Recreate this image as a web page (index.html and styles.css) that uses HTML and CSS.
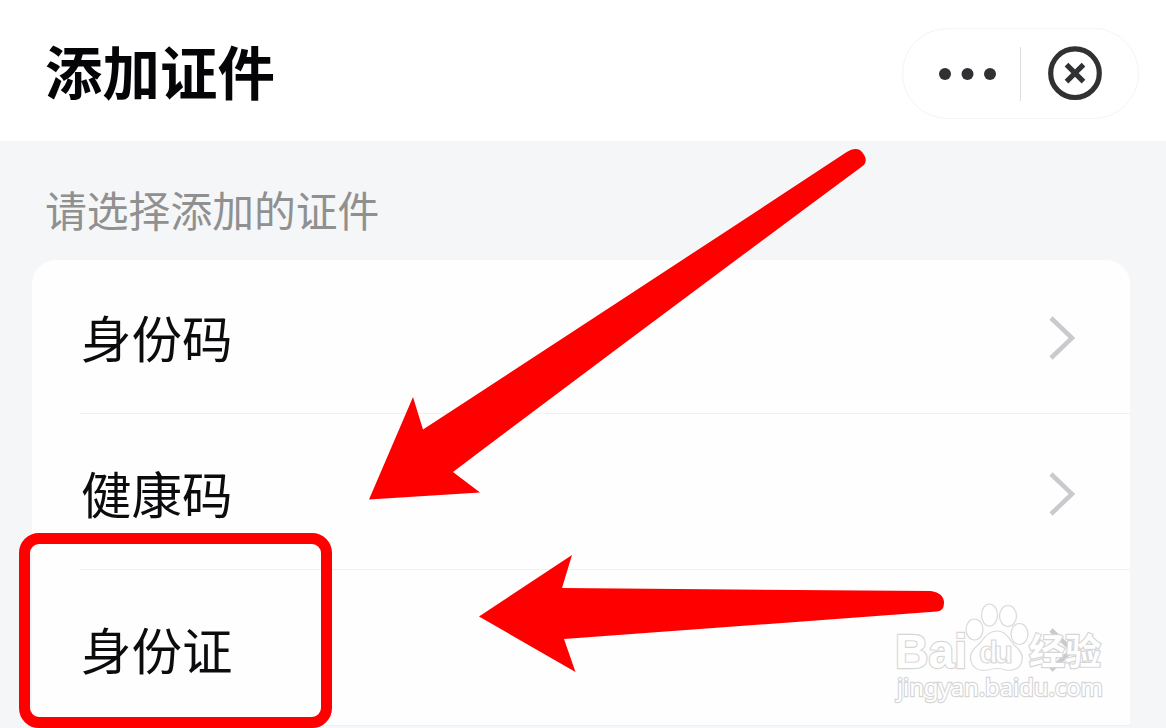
FILE: index.html
```
<!DOCTYPE html>
<html lang="zh-CN">
<head>
  <meta charset="UTF-8">
  <title>添加证件</title>
  <link rel="stylesheet" href="styles.css">
</head>
<body>

  <header class="topbar">
    <h1>添加证件</h1>
    <div class="capsule">
      <svg class="dots" width="60" height="14" viewBox="0 0 60 14">
        <circle cx="7" cy="7" r="6"/>
        <circle cx="29.5" cy="7" r="6"/>
        <circle cx="52" cy="7" r="6"/>
      </svg>
      <span class="split"></span>
      <svg class="close" width="56" height="56" viewBox="0 0 56 56">
        <circle cx="28" cy="27.2" r="24.3"/>
        <path d="M19.5 18.700L36.5 35.700M36.5 18.700L19.5 35.700"/>
      </svg>
    </div>
  </header>

  <main>
    <p class="hint">请选择添加的证件</p>
    <ul class="list">
      <li>
        <span>身份码</span>
        <svg class="chevron" width="30" height="48" viewBox="0 0 30 48"><path d="M4 4L25 24L4 44"/></svg>
      </li>
      <li>
        <span>健康码</span>
        <svg class="chevron" width="30" height="48" viewBox="0 0 30 48"><path d="M4 4L25 24L4 44"/></svg>
      </li>
      <li>
        <span>身份证</span>
        <svg class="chevron" width="30" height="48" viewBox="0 0 30 48"><path d="M4 4L25 24L4 44"/></svg>
      </li>
    </ul>
  </main>

  <!-- red marks drawn over the page -->
  <div class="mark-box"></div>
  <svg class="overlay" width="1166" height="728" viewBox="0 0 1166 728">
    <path class="arrow" d="M369 499.500L413 397L423 429.500Q640 288 846 152.500C853 148 859 148 862 152C867 158 867 163 862 166.500Q660 316 453 472L480 492.500Z"/>
    <path class="arrow" d="M479 616.500L572 555L562 588L931 591Q944 593 944 603Q944 611 937 611.500L564 639L575.500 672Z"/>

    <g class="watermark">
      <text class="brand" x="895" y="668" textLength="72" lengthAdjust="spacingAndGlyphs">Bai</text>
      <ellipse cx="974.500" cy="629.500" rx="8.500" ry="10.500"/>
      <ellipse cx="989.500" cy="615" rx="8" ry="11"/>
      <ellipse cx="1008" cy="616" rx="8.500" ry="10.500"/>
      <ellipse cx="1019.500" cy="634" rx="8.500" ry="10.500"/>
      <path d="M997 631C1005 631 1009 638 1014 645C1020 650 1023 654 1022 660C1021 669 1013 671 1006 670C1000 668 994 668 988 670C978 672 971 667 970.500 658C970 651 976 647 981 642C986 635 990 631 997 631Z"/>
      <text class="du" x="979" y="663" textLength="34">du</text>
      <text class="cn" x="1029" y="665" textLength="72">经验</text>
      <text class="site" x="897" y="696" textLength="206">jingyan.baidu.com</text>
    </g>
  </svg>

</body>
</html>
```
FILE: styles.css
```
* {
  box-sizing: border-box;
}

body {
  margin: 0;
  height: 728px;
  position: relative;
  overflow: hidden;
  background: #f5f6f8;
  font-family: "Noto Sans CJK SC", sans-serif;
}

.topbar {
  height: 141px;
  padding: 28px 27px 0 45px;
  display: flex;
  justify-content: space-between;
  align-items: flex-start;
  background: #fff;
}

h1 {
  margin: 0;
  font-size: 57.5px;
  line-height: 84px;
  font-weight: bold;
  color: #050507;
}

.capsule {
  width: 237px;
  height: 91px;
  padding: 0 35px 0 35px;
  display: flex;
  align-items: center;
  justify-content: space-between;
  border: 1.5px solid #f3f4f8;
  border-radius: 46px;
}

.dots {
  fill: #303133;
}

.split {
  width: 1px;
  height: 54px;
  margin-left: -5px;
  background: #dcdcde;
}

.close {
  fill: none;
  stroke: #303133;
  stroke-width: 5.2;
}

.hint {
  margin: 0;
  height: 119px;
  padding: 36px 0 0 45px;
  font-size: 41.8px;
  line-height: 64px;
  color: #909090;
}

.list {
  margin: 0 36px 0 32px;
  padding: 0;
  list-style: none;
  background: #fefefe;
  border-radius: 24px 24px 0 0;
}

.list li {
  height: 156px;
  margin-left: 48px;
  padding: 6px 53px 0 1px;
  display: flex;
  align-items: center;
  justify-content: space-between;
  border-bottom: 1px solid #eff0f3;
  font-size: 50.5px;
  line-height: 74px;
  color: #0c0c0e;
}

.list li:first-child {
  height: 154px;
  padding-top: 4px;
}

.list span {
  margin-top: -5px;
}

.chevron {
  margin-top: -1px;
  fill: none;
  stroke: #c9cacd;
  stroke-width: 4.5;
}

.mark-box {
  position: absolute;
  left: 19px;
  top: 533px;
  width: 313px;
  height: 195px;
  border: 11px solid #f00;
  border-radius: 20px;
}

.overlay {
  position: absolute;
  left: 0;
  top: 0;
}

.arrow {
  fill: #f00;
}

.watermark {
  fill: #fff;
  fill-opacity: 0.85;
  stroke: #d9d9d9;
  stroke-width: 1.2;
}

.brand {
  font: bold 48px "Liberation Sans", sans-serif;
}

.du {
  font: bold 31px "Liberation Sans", sans-serif;
}

.cn {
  font: bold 36px "Noto Sans CJK SC", sans-serif;
}

.brand,
.cn,
.site {
  fill-opacity: 1;
  stroke-width: 2.4;
  stroke: #d6d6d6;
  paint-order: stroke;
}

.site {
  font: 24px "Noto Sans", sans-serif;
}
```
